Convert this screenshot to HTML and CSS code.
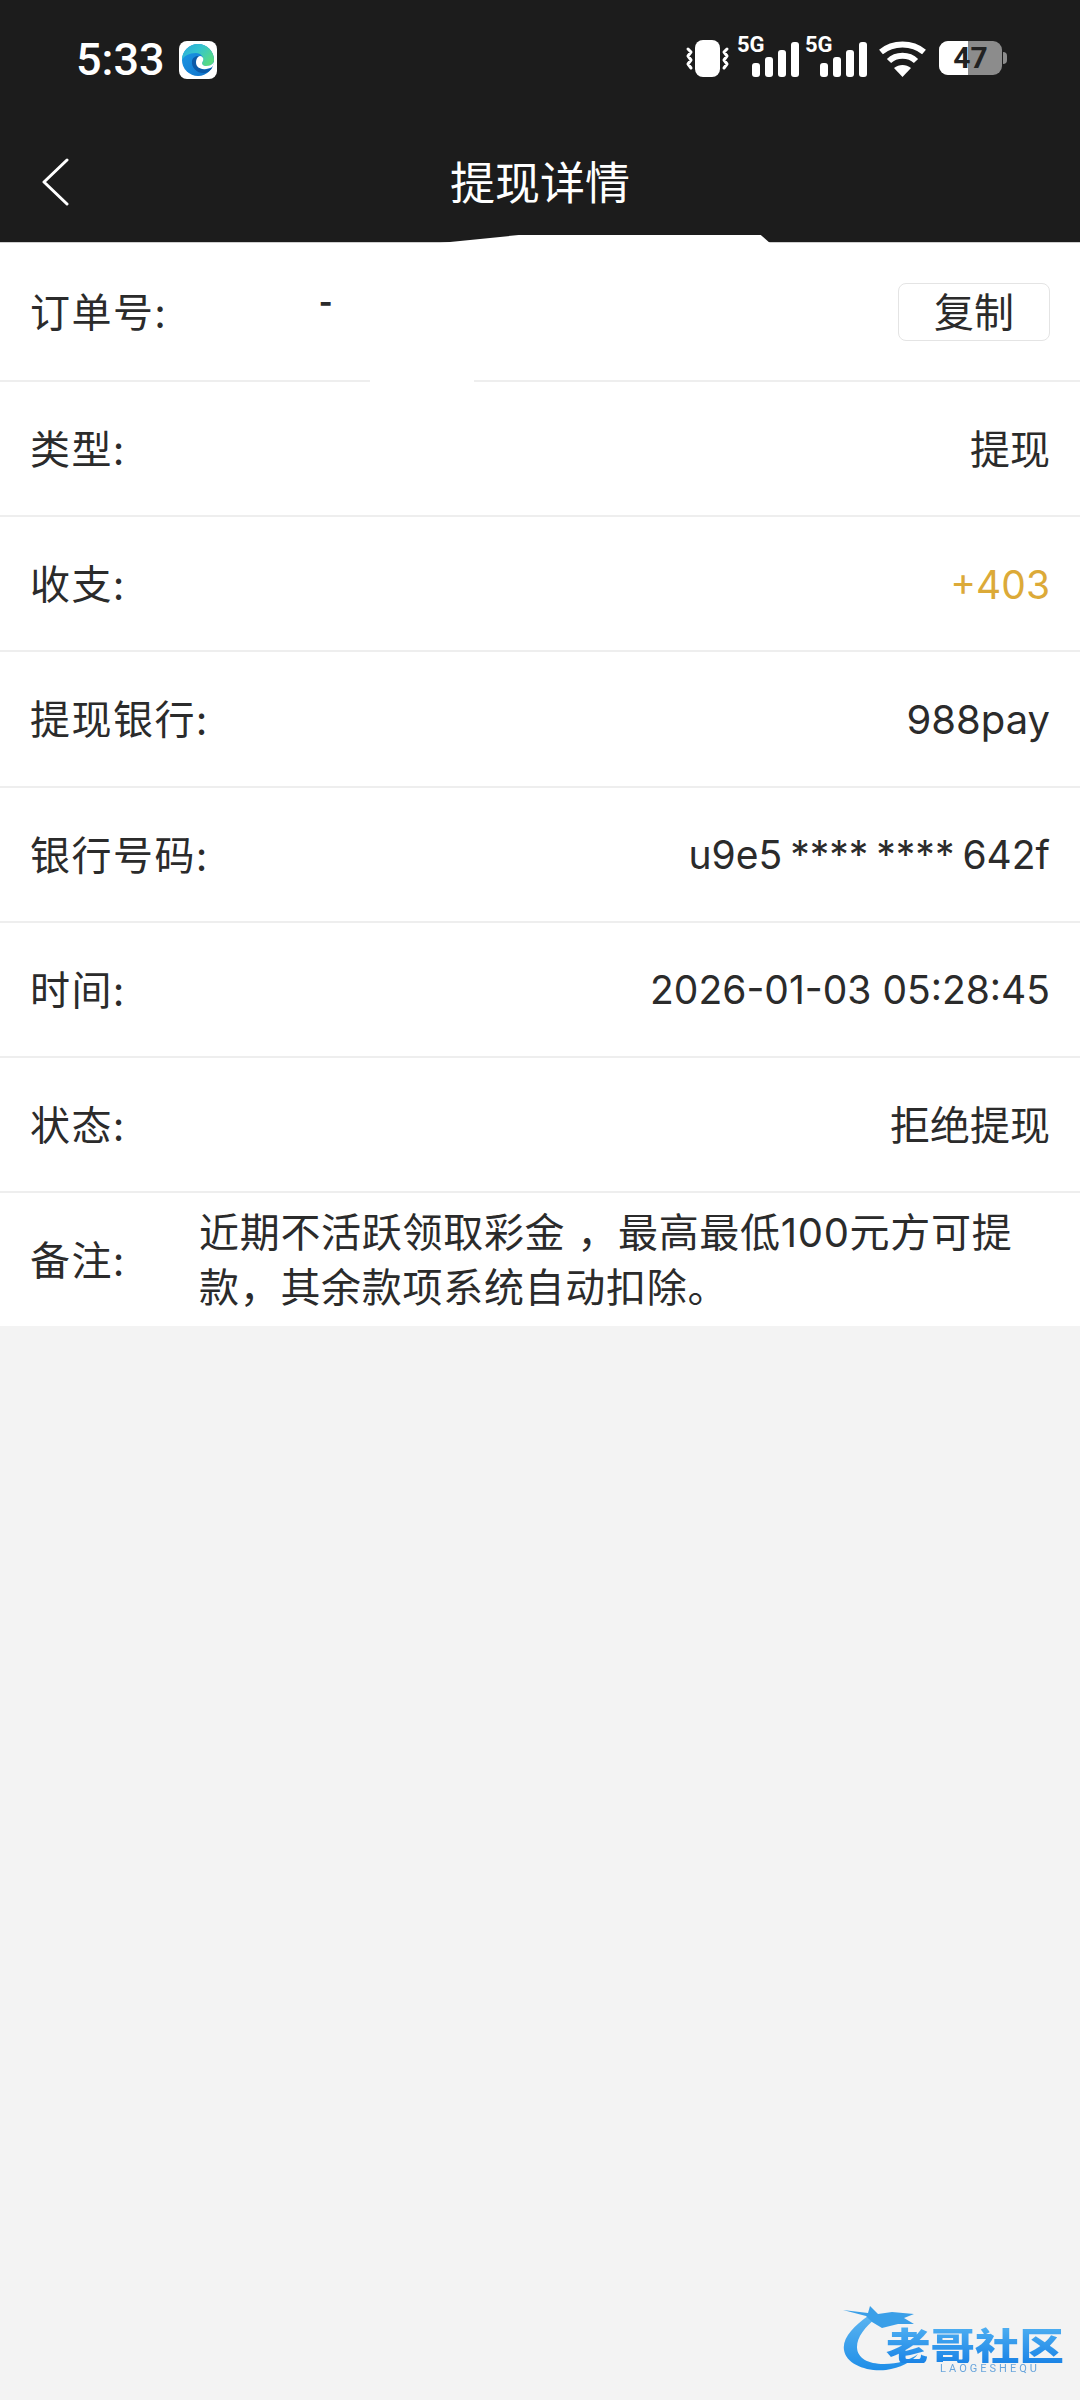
FILE: index.html
```html
<!DOCTYPE html>
<html lang="zh-CN">
<head>
    <meta charset="UTF-8">
    <meta name="viewport" content="width=device-width, initial-scale=1.0">
    <title>提现详情</title>
    <link rel="stylesheet" href="styles.css">
</head>
<body>
    <header class="top">
        <div class="status">
            <div class="status-left">
                <span class="time">5:33</span>
                <svg class="edge" width="38" height="38" viewBox="0 0 38 38">
                    <defs>
                        <linearGradient id="edgeTop" x1="0" y1="0" x2="1" y2="0.6">
                            <stop offset="0" stop-color="#2aa9dc"/>
                            <stop offset="0.5" stop-color="#35c4cf"/>
                            <stop offset="1" stop-color="#58da84"/>
                        </linearGradient>
                        <linearGradient id="edgeLow" x1="0" y1="0" x2="1" y2="1">
                            <stop offset="0" stop-color="#1c9be8"/>
                            <stop offset="1" stop-color="#0f6fc8"/>
                        </linearGradient>
                    </defs>
                    <rect width="38" height="38" rx="8" fill="#fff"/>
                    <circle cx="19" cy="19" r="16" fill="url(#edgeLow)"/>
                    <path d="M3 19C3 10 10 3 19 3C28 3 35 10 35 19C35 23 31 25 27 25C24 25 23 24 23 22L24 20C25 16 22 12 17 12C10 12 5 15 3 19Z" fill="url(#edgeTop)"/>
                    <path d="M13 20C12 27 19 33 26 32C29 31.5 32 29 33.5 26C31 28 27 29 23 28C18 27 16 22 20 15C16 15 13.5 17 13 20Z" fill="#0b5aa8"/>
                    <path d="M21 15C17 16 16 22 18 25C21 29 28 29 33 26C34.5 24.5 35 23 35 21C33 24 30 25 27 25C24 25 23 23.5 23 22C25 19 25 15.5 21 15Z" fill="#fff"/>
                </svg>
            </div>
            <div class="status-right">
                <svg width="46" height="37" viewBox="0 0 46 37" fill="#fff">
                    <rect x="10" y="0" width="25" height="37" rx="8"/>
                    <path d="M3 9l3 3-3 4 3 4-3 4 3 4M42 9l-3 3 3 4-3 4 3 4-3 4" fill="none" stroke="#fff" stroke-width="3" stroke-linecap="round" stroke-linejoin="round"/>
                </svg>
                <div class="signal">
                    <span class="net">5G</span>
                    <svg width="47" height="35" viewBox="0 0 47 35" fill="#fff">
                        <rect x="0" y="21" width="8" height="14" rx="3"/>
                        <rect x="13" y="15" width="8" height="20" rx="3"/>
                        <rect x="26" y="8" width="8" height="27" rx="3"/>
                        <rect x="39" y="0" width="8" height="35" rx="3"/>
                    </svg>
                </div>
                <div class="signal">
                    <span class="net">5G</span>
                    <svg width="47" height="35" viewBox="0 0 47 35" fill="#fff">
                        <rect x="0" y="21" width="8" height="14" rx="3"/>
                        <rect x="13" y="15" width="8" height="20" rx="3"/>
                        <rect x="26" y="8" width="8" height="27" rx="3"/>
                        <rect x="39" y="0" width="8" height="35" rx="3"/>
                    </svg>
                </div>
                <svg class="wifi" width="47" height="36" viewBox="0 0 47 36" fill="none" stroke="#fff" stroke-width="6">
                    <path d="M2 11C14 1 33 1 45 11"/>
                    <path d="M10 20C17 13 30 13 37 20"/>
                    <path d="M23.5 36L15 27C20 23 27 23 32 27Z" fill="#fff" stroke="none"/>
                </svg>
                <div class="battery">
                    <div class="battery-body">
                        <span class="battery-fill"></span>
                        <span class="battery-num">47</span>
                    </div>
                    <span class="battery-tip"></span>
                </div>
            </div>
        </div>
        <div class="nav">
            <svg class="back" width="30" height="50" viewBox="0 0 30 50" fill="none" stroke="#fff" stroke-width="3" stroke-linecap="round" stroke-linejoin="round">
                <path d="M26 2L3 24L26 46"/>
            </svg>
            <h1 class="title">提现详情</h1>
        </div>
        <span class="smear-top"></span>
    </header>

    <main class="detail">
        <div class="row row-first">
            <span class="label">订单号:</span>
            <span class="dash">-</span>
            <span class="copy">复制</span>
            <span class="smear-line"></span>
        </div>
        <div class="row">
            <span class="label">类型:</span>
            <span class="value">提现</span>
        </div>
        <div class="row">
            <span class="label">收支:</span>
            <span class="value money">+403</span>
        </div>
        <div class="row">
            <span class="label">提现银行:</span>
            <span class="value">988pay</span>
        </div>
        <div class="row">
            <span class="label">银行号码:</span>
            <span class="value card-no">u9e5 **** **** 642f</span>
        </div>
        <div class="row">
            <span class="label">时间:</span>
            <span class="value date">2026-01-03 05:28:45</span>
        </div>
        <div class="row">
            <span class="label">状态:</span>
            <span class="value">拒绝提现</span>
        </div>
        <div class="row row-note">
            <span class="label">备注:</span>
            <p class="note">近期不活跃领取彩金 ，最高最低100元方可提款，其余款项系统自动扣除。</p>
        </div>
    </main>

    <div class="mark">
        <svg class="dragon" width="120" height="72" viewBox="0 0 120 72">
            <defs>
                <linearGradient id="dragonFill" x1="0" y1="0" x2="0" y2="1">
                    <stop offset="0" stop-color="#5bb4f0"/>
                    <stop offset="1" stop-color="#1f8ee8"/>
                </linearGradient>
            </defs>
            <path d="M26 12C12 22 0 34 2 46c2 14 22 22 42 20 14-2 26-8 32-16-8 6-20 10-34 10-16 0-27-6-27-17 0-10 8-20 19-29z" fill="url(#dragonFill)"/>
            <path d="M1 6L26 9L28 2L36 10L50 8L72 10L62 14L72 20L56 20L40 24L30 18L24 12Z" fill="#3a9fe8"/>
        </svg>
        <div class="mark-text">
            <span class="mark-name">老哥社区</span>
            <span class="mark-sub">LAOGESHEQU</span>
        </div>
    </div>
</body>
</html>
```

FILE: styles.css
```css
* {
    box-sizing: border-box;
}
html, body {
    margin: 0;
    padding: 0;
}
body {
    width: 1080px;
    height: 2400px;
    position: relative;
    overflow: hidden;
    background-color: #f3f3f3;
    font-family: "Noto Sans CJK SC", "Noto Sans", sans-serif;
    color: #2b2b2b;
}
.top {
    height: 243px;
    background-color: #1c1c1c;
    position: relative;
    border-bottom: 1px solid #cfcfcf;
}
.status {
    height: 120px;
    padding: 38px 73px 0 76px;
    display: flex;
    justify-content: space-between;
    align-items: flex-start;
}
.status-left {
    display: flex;
    align-items: center;
    gap: 14px;
}
.time {
    font-family: Roboto, sans-serif;
    font-size: 45px;
    line-height: 44px;
    font-weight: 500;
    color: #fff;
}
.status-right {
    display: flex;
    align-items: flex-end;
    gap: 6px;
    height: 40px;
    margin-top: -1px;
}
.signal {
    position: relative;
    width: 62px;
    height: 40px;
    display: flex;
    justify-content: flex-end;
    align-items: flex-end;
}
.net {
    position: absolute;
    left: 0;
    top: -2px;
    font-family: Roboto, sans-serif;
    font-size: 22px;
    line-height: 20px;
    font-weight: 700;
    color: #fff;
}
.wifi {
    margin-left: 6px;
}
.battery {
    display: flex;
    align-items: center;
    gap: 1px;
    margin-left: 7px;
    margin-bottom: 2px;
}
.battery-body {
    width: 63px;
    height: 34px;
    border-radius: 9px;
    position: relative;
    overflow: hidden;
    background-color: #8c8c8c;
    display: flex;
    align-items: center;
    justify-content: center;
}
.battery-fill {
    position: absolute;
    left: 0;
    top: 0;
    bottom: 0;
    width: 46%;
    background-color: #fff;
}
.battery-num {
    position: relative;
    font-family: Roboto, sans-serif;
    font-size: 30px;
    line-height: 34px;
    font-weight: 700;
    color: #222;
}
.battery-tip {
    width: 4px;
    height: 12px;
    border-radius: 0 4px 4px 0;
    background-color: #8c8c8c;
}
.nav {
    height: 122px;
    position: relative;
    display: flex;
    align-items: center;
    justify-content: center;
}
.back {
    position: absolute;
    left: 41px;
    top: 38px;
}
.title {
    margin: 0;
    font-size: 45px;
    line-height: 60px;
    font-weight: 400;
    color: #fff;
}
.smear-top {
    position: absolute;
    left: 430px;
    top: 235px;
    width: 341px;
    height: 9px;
    background-color: #fff;
    clip-path: polygon(0 100%, 26% 0, 97% 0, 100% 100%);
}
.detail {
    background-color: #fff;
}
.row {
    height: 135.2px;
    padding: 0 30px;
    display: flex;
    justify-content: space-between;
    align-items: center;
    border-bottom: 2px solid #eeeeee;
    font-size: 40px;
    position: relative;
}
.row-first {
    height: 139px;
}
.row-note {
    height: 133px;
    border-bottom: 0;
    justify-content: flex-start;
}
.label {
    flex-shrink: 0;
    line-height: 56px;
    letter-spacing: 1.5px;
    padding-bottom: 3px;
}
.value {
    font-family: Inter, "Noto Sans CJK SC", sans-serif;
    line-height: 56px;
    padding-top: 2px;
}
.money {
    color: #dcaa38;
    font-size: 39px;
}
.date {
    font-size: 39px;
}
.card-no {
    font-size: 39px;
    word-spacing: -3px;
}
.dash {
    position: absolute;
    left: 319px;
    top: 37px;
    font-size: 36px;
    line-height: 36px;
    font-weight: 700;
}
.copy {
    width: 152px;
    height: 58px;
    padding-bottom: 3px;
    border: 1px solid #e4e4e4;
    border-radius: 8px;
    display: flex;
    align-items: center;
    justify-content: center;
    font-size: 40px;
    line-height: 52px;
}
.smear-line {
    position: absolute;
    left: 370px;
    bottom: -2px;
    width: 104px;
    height: 2px;
    background-color: #fff;
}
.row-note .label {
    width: 169px;
}
.note {
    margin: 0;
    padding-top: 1px;
    width: 845px;
    font-family: Inter, "Noto Sans CJK SC", sans-serif;
    font-size: 40px;
    line-height: 55px;
    letter-spacing: 0.7px;
}
.mark {
    position: absolute;
    left: 842px;
    top: 2304px;
    width: 226px;
    height: 72px;
    filter: blur(0.5px);
}
.dragon {
    position: absolute;
    left: 0;
    top: 0;
}
.mark-text {
    position: absolute;
    left: 40px;
    top: 21px;
    display: flex;
    flex-direction: column;
    align-items: center;
    width: 186px;
}
.mark-name {
    font-size: 38px;
    line-height: 38px;
    font-weight: 900;
    white-space: nowrap;
    transform: scaleX(1.17);
    background: linear-gradient(#4fb0f2, #1b84e6);
    -webkit-background-clip: text;
    background-clip: text;
    color: transparent;
}
.mark-sub {
    font-family: Roboto, sans-serif;
    font-size: 11px;
    line-height: 11px;
    letter-spacing: 3px;
    color: #6aa6dc;
    padding-left: 30px;
}
```
